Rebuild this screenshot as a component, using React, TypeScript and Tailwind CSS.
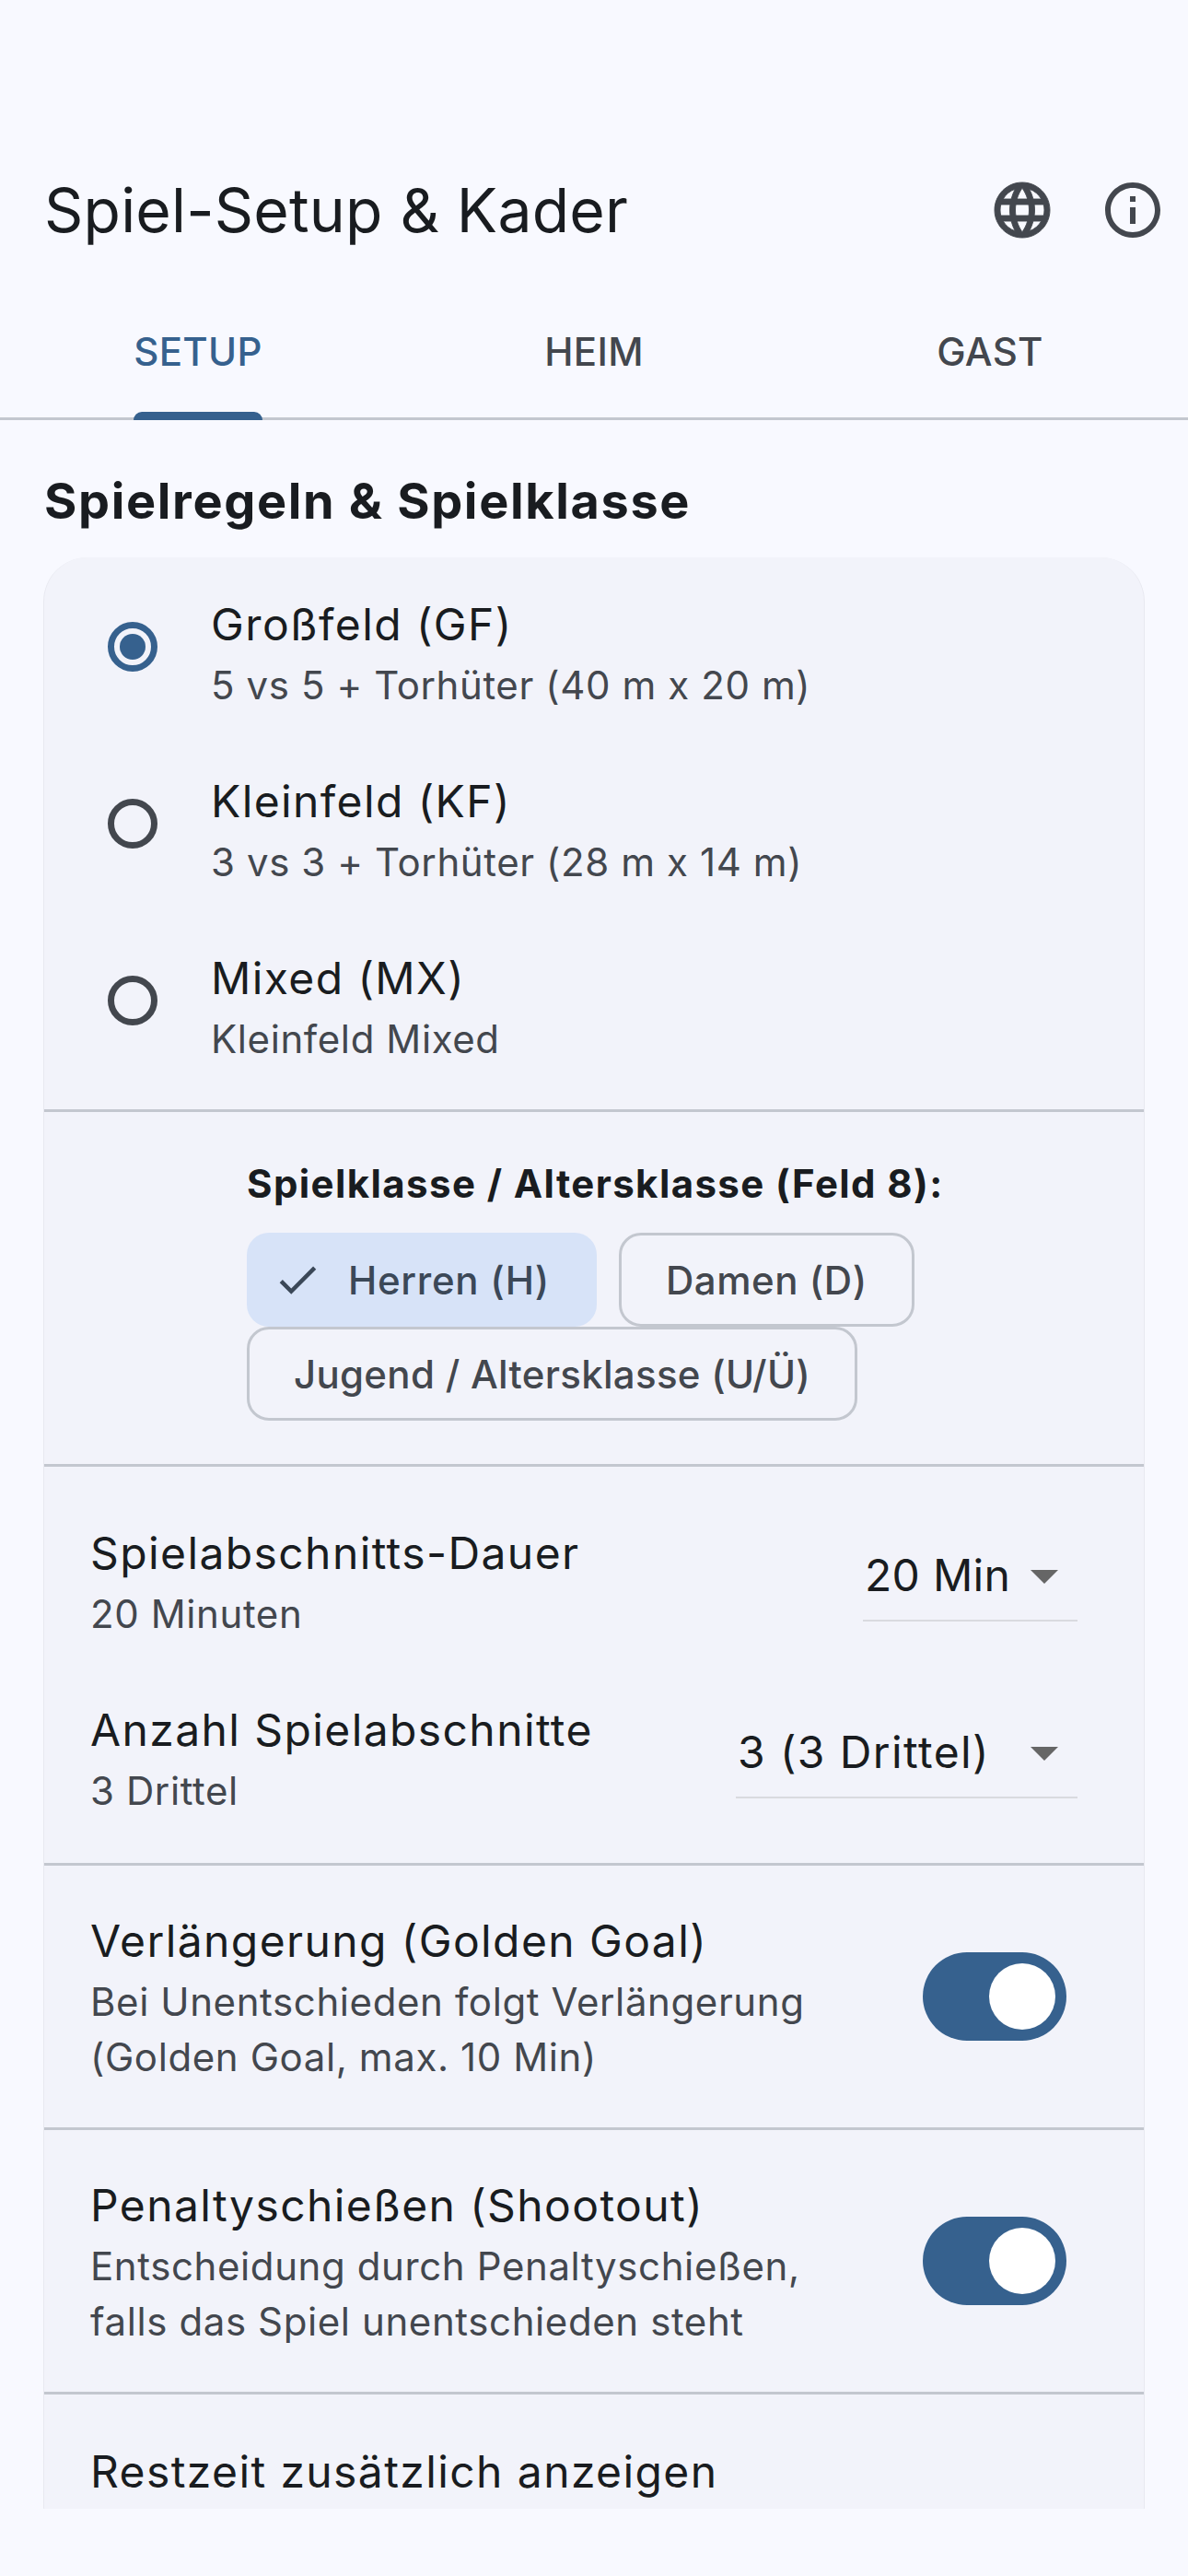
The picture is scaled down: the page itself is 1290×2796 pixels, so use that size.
import React from 'react'
import { MdInfoOutline, MdCheck, MdArrowDropDown } from 'react-icons/md'

const gameModes = [
  { title: 'Großfeld (GF)', sub: '5 vs 5 + Torhüter (40 m x 20 m)', selected: true },
  { title: 'Kleinfeld (KF)', sub: '3 vs 3 + Torhüter (28 m x 14 m)', selected: false },
  { title: 'Mixed (MX)', sub: 'Kleinfeld Mixed', selected: false },
]

function GlobeIcon() {
  return (
    <svg viewBox="0 0 24 24" className="w-[72px] h-[72px]" fill="currentColor" stroke="currentColor" strokeWidth="0.3">
      <path d="M11.99 2C6.47 2 2 6.48 2 12s4.47 10 9.99 10C17.52 22 22 17.52 22 12S17.52 2 11.99 2zm6.93 6h-2.95c-.32-1.25-.78-2.45-1.38-3.56 1.84.63 3.37 1.91 4.33 3.56zM12 4.04c.83 1.2 1.48 2.53 1.91 3.96h-3.82c.43-1.43 1.08-2.76 1.91-3.96zM4.26 14C4.1 13.36 4 12.69 4 12s.1-1.36.26-2h3.38c-.08.66-.14 1.32-.14 2 0 .68.06 1.34.14 2H4.26zm.82 2h2.95c.32 1.25.78 2.45 1.38 3.56-1.84-.63-3.37-1.9-4.33-3.56zm2.95-8H5.08c.96-1.66 2.49-2.93 4.33-3.56C8.81 5.55 8.35 6.75 8.03 8zM12 19.96c-.83-1.2-1.48-2.53-1.91-3.96h3.82c-.43 1.43-1.08 2.76-1.91 3.96zM14.34 14H9.66c-.09-.66-.16-1.32-.16-2 0-.68.07-1.35.16-2h4.68c.09.65.16 1.32.16 2 0 .68-.07 1.34-.16 2zm.25 5.56c.6-1.11 1.06-2.31 1.38-3.56h2.95c-.96 1.65-2.49 2.93-4.33 3.56zM16.36 14c.08-.66.14-1.32.14-2 0-.68-.06-1.34-.14-2h3.38c.16.64.26 1.31.26 2s-.1 1.36-.26 2h-3.38z" />
    </svg>
  )
}

function Tab({ label, active }: { label: string; active?: boolean }) {
  return (
    <div className="flex-1 h-[144px] flex items-center justify-center">
      <div className={`relative h-full flex items-center text-[42px] font-medium tracking-[0.3px] ${active ? 'text-[#36618e]' : 'text-[#43474e]'}`}>
        {label}
        {active && <div className="absolute left-0 right-0 bottom-[-3px] h-[9px] bg-[#36618e] rounded-t-[9px]" />}
      </div>
    </div>
  )
}

function Chip({ label, selected, tracking }: { label: string; selected?: boolean; tracking: string }) {
  if (selected) {
    return (
      <div className={`h-[102px] pl-[28px] pr-[51px] flex items-center rounded-[24px] bg-[#d7e3f8] text-[#3b4858] text-[42px] font-medium ${tracking}`}>
        <MdCheck className="w-[54px] h-[54px] mr-[28px]" />
        {label}
      </div>
    )
  }
  return (
    <div className={`h-[102px] px-[48px] flex items-center rounded-[24px] border-[3px] border-[#c3c7cf] text-[#43474e] text-[42px] font-medium ${tracking}`}>
      {label}
    </div>
  )
}

function Dropdown({ value, width, tracking }: { value: string; width: string; tracking: string }) {
  return (
    <div className={`${width} h-[72px] border-b-[2px] border-[#d9dadf] flex items-start justify-between box-content pt-[2px] pb-[12px]`}>
      <span className={`text-[48px] leading-[72px] text-[#191c20] pl-[2px] whitespace-nowrap ${tracking}`}>{value}</span>
      <MdArrowDropDown className="w-[72px] h-[72px] text-[#666666] shrink-0" />
    </div>
  )
}

function SelectRow({ title, sub, children }: { title: string; sub: string; children: React.ReactNode }) {
  return (
    <div className="flex items-center justify-between">
      <div>
        <div className="text-[48px] leading-[72px] tracking-[1.4px] text-[#191c20]">{title}</div>
        <div className="text-[42px] leading-[60px] tracking-[0.6px] text-[#43474e]">{sub}</div>
      </div>
      {children}
    </div>
  )
}

function SwitchOn() {
  return (
    <div className="w-[156px] h-[96px] rounded-full bg-[#36618e] flex items-center justify-end pr-[12px] shrink-0">
      <div className="w-[72px] h-[72px] rounded-full bg-white" />
    </div>
  )
}

function ToggleRow({ title, lines }: { title: string; lines: string[] }) {
  return (
    <div className="border-t-[3px] border-[#c3c7cf] pl-[50px] pr-[84px] py-[46px] flex items-center justify-between">
      <div>
        <div className="text-[48px] leading-[72px] tracking-[1.4px] text-[#191c20]">{title}</div>
        {lines.map((l) => (
          <div key={l} className="text-[42px] leading-[60px] tracking-[0.6px] text-[#43474e]">{l}</div>
        ))}
      </div>
      <SwitchOn />
    </div>
  )
}

export default function App() {
  return (
    <div className="w-[1290px] h-[2796px] bg-[#f8f9ff] overflow-hidden flex flex-col font-['Inter',sans-serif] text-[#191c20]">
      {/* App bar */}
      <div className="pt-[186px] pl-[48px] pr-[24px] flex items-center justify-between h-[309px] pb-[39px]">
        <h1 className="text-[66px] leading-[84px] font-normal tracking-[0.2px]">Spiel-Setup &amp; Kader</h1>
        <div className="flex items-center gap-[48px] text-[#43474e]">
          <GlobeIcon />
          <MdInfoOutline className="w-[72px] h-[72px]" />
        </div>
      </div>

      {/* Tabs */}
      <div className="flex border-b-[3px] border-[#c3c7cf] shrink-0">
        <Tab label="SETUP" active />
        <Tab label="HEIM" />
        <Tab label="GAST" />
      </div>

      <div className="flex-1 min-h-0 pt-[52px] pb-[73px] flex flex-col">
        <h2 className="pl-[48px] text-[54px] leading-[72px] font-bold tracking-[1.65px] mb-[25px]">Spielregeln &amp; Spielklasse</h2>

        <div className="mx-[47px] flex-1 min-h-0 overflow-hidden bg-[#f2f3fa] border-x border-[#e8e9f0] rounded-t-[48px]">
          {/* Game modes */}
          <div className="pt-[37px] pb-[46px] flex flex-col gap-[60px]">
            {gameModes.map((m) => (
              <div key={m.title} className="flex items-start pl-[69px]">
                <div className={`w-[54px] h-[54px] mt-[33px] mr-[58px] rounded-full border-[7px] flex items-center justify-center shrink-0 ${m.selected ? 'border-[#36618e]' : 'border-[#43474e]'}`}>
                  {m.selected && <div className="w-[28px] h-[28px] rounded-full bg-[#36618e]" />}
                </div>
                <div>
                  <div className="text-[48px] leading-[72px] tracking-[1.4px] text-[#191c20]">{m.title}</div>
                  <div className="text-[42px] leading-[60px] tracking-[0.6px] text-[#43474e]">{m.sub}</div>
                </div>
              </div>
            ))}
          </div>

          {/* Class chips */}
          <div className="border-t-[3px] border-[#c3c7cf] pt-[48px] pb-[47px] pl-[220px]">
            <div className="text-[42px] leading-[60px] font-bold tracking-[1.4px] mb-[23px]">Spielklasse / Altersklasse (Feld 8):</div>
            <div className="flex flex-wrap gap-x-[24px] w-[900px]">
              <Chip label="Herren (H)" selected tracking="tracking-[0.7px]" />
              <Chip label="Damen (D)" tracking="tracking-[0.5px]" />
              <Chip label="Jugend / Altersklasse (U/Ü)" tracking="tracking-[0.3px]" />
            </div>
          </div>

          {/* Duration */}
          <div className="border-t-[3px] border-[#c3c7cf] pt-[58px] pb-[48px] pl-[50px] pr-[72px] flex flex-col gap-[60px]">
            <SelectRow title="Spielabschnitts-Dauer" sub="20 Minuten">
              <Dropdown value="20 Min" width="w-[233px]" tracking="tracking-[0.3px]" />
            </SelectRow>
            <SelectRow title="Anzahl Spielabschnitte" sub="3 Drittel">
              <Dropdown value="3 (3 Drittel)" width="w-[371px]" tracking="tracking-[1.4px]" />
            </SelectRow>
          </div>

          <ToggleRow title="Verlängerung (Golden Goal)" lines={['Bei Unentschieden folgt Verlängerung', '(Golden Goal, max. 10 Min)']} />
          <ToggleRow title="Penaltyschießen (Shootout)" lines={['Entscheidung durch Penaltyschießen,', 'falls das Spiel unentschieden steht']} />

          <div className="border-t-[3px] border-[#c3c7cf] pt-[48px] pl-[50px]">
            <div className="text-[48px] leading-[72px] tracking-[1.4px] text-[#191c20]">Restzeit zusätzlich anzeigen</div>
          </div>
        </div>
      </div>
    </div>
  )
}
